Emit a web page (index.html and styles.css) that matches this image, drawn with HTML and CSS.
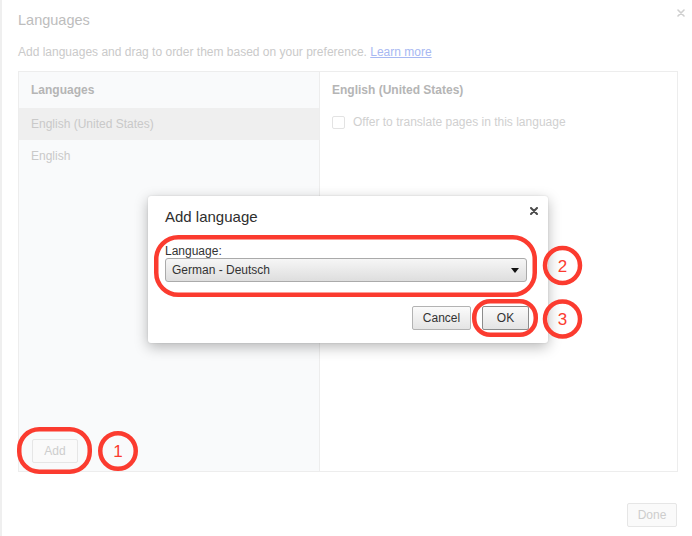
FILE: index.html
```html
<!DOCTYPE html>
<html lang="en">
<head>
<meta charset="utf-8">
<title>Languages</title>
<link rel="stylesheet" href="styles.css">
</head>
<body>
<div class="page">
  <div class="head">
    <h1 class="title">Languages</h1>
    <svg class="close" width="8" height="8" viewBox="0 0 8 8"><path d="M1 1L7 7M7 1L1 7" stroke="#cfcfcf" stroke-width="1.6" stroke-linecap="round"/></svg>
  </div>
  <p class="sub">Add languages and drag to order them based on your preference. <a href="#" class="link">Learn more</a></p>
  <div class="panel">
    <div class="col-left">
      <div class="col-head">Languages</div>
      <div class="row selected">English (United States)</div>
      <div class="row">English</div>
      <div class="left-foot"><button class="btn-dis add">Add</button></div>
    </div>
    <div class="col-right">
      <div class="col-head">English (United States)</div>
      <label class="check-row"><span class="checkbox"></span>Offer to translate pages in this language</label>
    </div>
  </div>
  <div class="foot"><button class="btn-dis done">Done</button></div>

  <div class="modal">
    <div class="modal-head">
      <h2 class="modal-title">Add language</h2>
      <svg class="modal-close" width="8" height="8" viewBox="0 0 8 8"><path d="M1 1L7 7M7 1L1 7" stroke="#4a4a4a" stroke-width="2" stroke-linecap="round"/></svg>
    </div>
    <div class="label">Language:</div>
    <div class="select"><span>German - Deutsch</span><span class="arrow"></span></div>
    <div class="actions">
      <button class="btn cancel">Cancel</button>
      <button class="btn ok">OK</button>
    </div>
  </div>

  <svg class="marks" width="692" height="536" viewBox="0 0 692 536">
    <g fill="none" stroke="#fb3b2f" stroke-width="4.5">
      <rect x="19.25" y="429.25" width="70.5" height="42.5" rx="20"/>
      <circle cx="118" cy="451" r="17.75"/>
      <rect x="156.25" y="237.25" width="378.5" height="57.5" rx="22"/>
      <circle cx="562.5" cy="265.5" r="17.5"/>
      <rect x="474.25" y="301.25" width="61.5" height="33.5" rx="16"/>
      <circle cx="562.5" cy="319" r="17.5"/>
    </g>
    <g fill="#fb3b2f" font-family="Liberation Sans, Arial, sans-serif" font-size="17" text-anchor="middle">
      <text x="118" y="457">1</text>
      <text x="562.5" y="271.5">2</text>
      <text x="562.5" y="325">3</text>
    </g>
  </svg>
</div>
</body>
</html>
```

FILE: styles.css
```css
* { box-sizing: border-box; }
html, body { margin: 0; padding: 0; }
body {
  font-family: "Liberation Sans", Arial, Helvetica, sans-serif;
  background: #fff;
  width: 692px;
  height: 536px;
  overflow: hidden;
}
.page {
  position: relative;
  width: 692px;
  height: 536px;
  padding: 10px 14px 0 16px;
  border-left: 2px solid #efefef;
  display: flex;
  flex-direction: column;
}
.head {
  display: flex;
  justify-content: space-between;
  align-items: flex-start;
  margin-right: -7px;
}
.title {
  margin: 0;
  font-size: 14.5px;
  line-height: 20px;
  font-weight: normal;
  color: #bdbdbd;
}
.close { margin-top: -1px; }
.sub {
  margin: 13px 0 0;
  font-size: 12px;
  line-height: 18px;
  color: #cacaca;
}
.link { color: #a7b8f2; text-decoration: underline; }
.panel {
  margin-top: 10px;
  height: 401px;
  border: 1px solid #ededed;
  display: flex;
}
.col-left {
  width: 300px;
  background: #f9fafb;
  display: flex;
  flex-direction: column;
}
.col-right {
  flex: 1;
  border-left: 1px solid #ededed;
  padding-left: 12px;
}
.col-head {
  height: 36px;
  line-height: 36px;
  font-size: 12px;
  font-weight: bold;
  color: #b5b5b5;
}
.col-left .col-head { padding-left: 12px; }
.row {
  height: 32px;
  line-height: 32px;
  padding-left: 12px;
  font-size: 12px;
  color: #c9c9c9;
}
.row.selected { background: #efefef; }
.left-foot {
  margin-top: auto;
  padding: 0 0 8px 13px;
}
.btn-dis {
  font-family: inherit;
  font-size: 12px;
  height: 24px;
  padding: 0;
  border: 1px solid #e6e6e6;
  border-radius: 2px;
  background: #fafafa;
  color: #cdcdcd;
}
.add { width: 46px; }
.check-row {
  display: flex;
  align-items: center;
  height: 28px;
  font-size: 12px;
  color: #d0d0d0;
}
.checkbox {
  width: 13px;
  height: 13px;
  border: 1px solid #e3e3e3;
  border-radius: 2px;
  background: #fff;
  margin-right: 8px;
}
.foot {
  display: flex;
  justify-content: flex-end;
  margin-top: 31px;
  margin-right: 1px;
}
.done { width: 50px; }

.modal {
  position: absolute;
  left: 146px;
  top: 196px;
  width: 400px;
  height: 147px;
  background: #fff;
  border-radius: 3px;
  box-shadow: 0 4px 14px rgba(0,0,0,0.28), 0 0 2px rgba(0,0,0,0.12);
  padding: 11px 21px 0 17px;
}
.modal-head {
  display: flex;
  justify-content: space-between;
  align-items: flex-start;
  margin-right: -11px;
}
.modal-title {
  margin: 0;
  font-size: 15px;
  line-height: 20px;
  font-weight: normal;
  color: #2e2e2e;
}
.modal-close { margin-top: 0; }
.label {
  margin-top: 17px;
  font-size: 12px;
  line-height: 14px;
  color: #333;
}
.select {
  height: 24px;
  border: 1px solid #aaa;
  border-radius: 3px;
  background: linear-gradient(#f6f6f6, #dedede);
  display: flex;
  align-items: center;
  justify-content: space-between;
  padding: 0 7px 0 6px;
  font-size: 12px;
  color: #333;
}
.arrow {
  width: 0;
  height: 0;
  border-left: 4px solid transparent;
  border-right: 4px solid transparent;
  border-top: 5px solid #111;
}
.actions {
  margin-top: 24px;
  display: flex;
  justify-content: flex-end;
  gap: 11px;
  margin-right: -2px;
}
.btn {
  font-family: inherit;
  font-size: 12px;
  color: #333;
  height: 24px;
  border: 1px solid #b3b3b3;
  border-radius: 2px;
  background: linear-gradient(#fbfbfb, #e4e4e4);
  padding: 0;
}
.cancel { width: 59px; }
.ok { width: 47px; border-color: #8c8c8c; }
.marks {
  position: absolute;
  left: -2px;
  top: 0;
  pointer-events: none;
}
```
